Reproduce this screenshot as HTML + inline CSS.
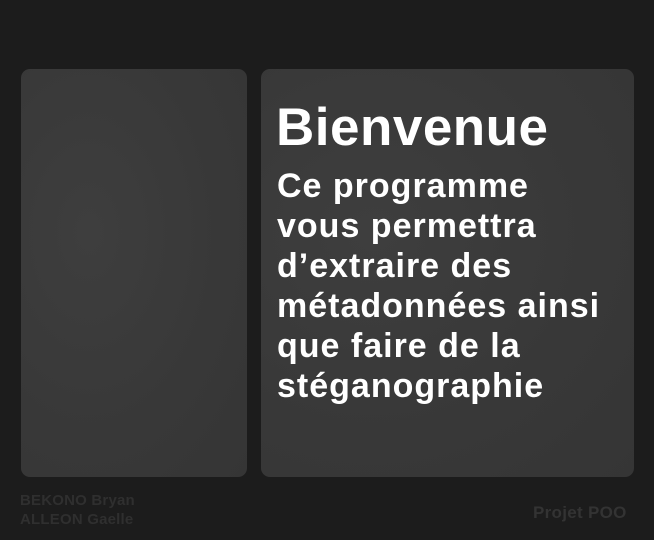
<!DOCTYPE html>
<html><head><meta charset="utf-8"><style>
html,body{margin:0;padding:0;width:654px;height:540px;background:#1c1c1c;overflow:hidden;font-family:"Liberation Sans",sans-serif;}
.p{position:absolute;border-radius:9px;background:radial-gradient(ellipse at 30% 40%,#3e3e3e,#383838 60%,#353535);}
.t{position:absolute;color:#fff;font-weight:bold;white-space:nowrap;}
.f{position:absolute;font-weight:bold;color:#2f2f2f;white-space:nowrap;}
</style></head><body>
<div class="p" style="left:21px;top:69px;width:226px;height:408px;"></div>
<div class="p" style="left:261px;top:69px;width:373px;height:408px;"></div>
<div class="t" style="left:276px;top:98px;font-size:53px;line-height:60px;letter-spacing:0.5px;">Bienvenue</div>
<div class="t" style="left:277px;top:166px;font-size:34px;line-height:40px;letter-spacing:1px;">Ce programme<br>vous permettra<br>d’extraire des<br>métadonnées ainsi<br>que faire de la<br>stéganographie</div>
<div class="f" style="left:20px;top:491px;font-size:15px;line-height:19px;letter-spacing:0.2px;">BEKONO Bryan<br>ALLEON Gaelle</div>
<div class="f" style="left:533px;top:502px;font-size:17px;line-height:22px;letter-spacing:0.3px;color:#333;">Projet POO</div>
</body></html>
